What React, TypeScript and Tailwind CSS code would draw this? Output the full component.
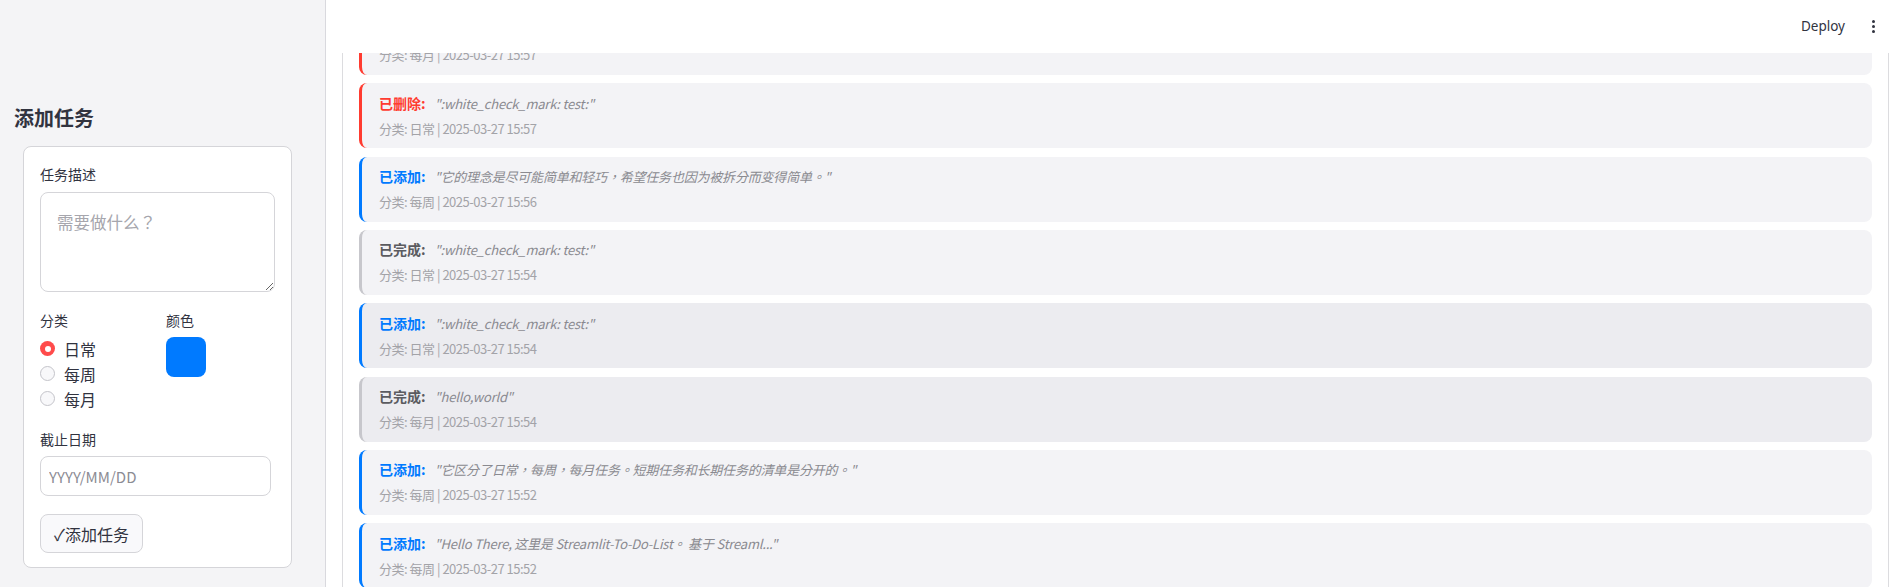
import { useState } from 'react';

type Entry = {
  kind: 'deleted' | 'added' | 'done';
  text: string;
  cat: string;
  time: string;
  dim?: boolean;
};

const entries: Entry[] = [
  { kind: 'deleted', text: '":white_check_mark: test:"', cat: '每月', time: '2025-03-27 15:57' },
  { kind: 'deleted', text: '":white_check_mark: test:"', cat: '日常', time: '2025-03-27 15:57' },
  { kind: 'added', text: '"它的理念是尽可能简单和轻巧，希望任务也因为被拆分而变得简单。"', cat: '每周', time: '2025-03-27 15:56' },
  { kind: 'done', text: '":white_check_mark: test:"', cat: '日常', time: '2025-03-27 15:54' },
  { kind: 'added', text: '":white_check_mark: test:"', cat: '日常', time: '2025-03-27 15:54', dim: true },
  { kind: 'done', text: '"hello,world"', cat: '每月', time: '2025-03-27 15:54', dim: true },
  { kind: 'added', text: '"它区分了日常，每周，每月任务。短期任务和长期任务的清单是分开的。"', cat: '每周', time: '2025-03-27 15:52' },
  { kind: 'added', text: '"Hello There, 这里是 Streamlit-To-Do-List。 基于 Streaml..."', cat: '每周', time: '2025-03-27 15:52' },
];

const kindStyle = {
  deleted: { label: '已删除:', border: 'border-[#ff3b30]', color: 'text-[#ff3b30]' },
  added: { label: '已添加:', border: 'border-[#007aff]', color: 'text-[#007aff]' },
  done: { label: '已完成:', border: 'border-[#c7c7cc]', color: 'text-[#5b5b60]' },
};

function LogCard({ e }: { e: Entry }) {
  const s = kindStyle[e.kind];
  return (
    <div
      className={`h-[65px] shrink-0 rounded-lg border-l-[3px] ${s.border} ${
        e.dim ? 'bg-[#ececf0]' : 'bg-[#f3f3f6]'
      } pl-[17px] pt-[10px]`}
    >
      <div className="flex items-center h-5">
        <span className={`text-[14px] font-bold ${s.color}`}>{s.label}</span>
        <span className="ml-[9px] text-[13px] tracking-[-0.2px] italic text-[#8a8a90] font-['Noto_Sans_CJK_TC',sans-serif]">
          {e.text}
        </span>
      </div>
      <div className="mt-[5px] h-5 flex items-center text-[13px] tracking-[-0.5px] text-[#a3a3a8]">
        分类: {e.cat} | {e.time}
      </div>
    </div>
  );
}

function Radio({ label, checked, onClick }: { label: string; checked: boolean; onClick: () => void }) {
  return (
    <button onClick={onClick} className="flex items-center h-[25px] text-left">
      {checked ? (
        <span className="w-[15px] h-[15px] rounded-full bg-[#ff4b4b] flex items-center justify-center">
          <span className="w-[6px] h-[6px] rounded-full bg-white" />
        </span>
      ) : (
        <span className="w-[15px] h-[15px] rounded-full border border-[#c4c4ca] bg-[#f8f8fa]" />
      )}
      <span className="ml-[9px] text-[16px] text-[#31333f]">{label}</span>
    </button>
  );
}

export default function App() {
  const [cat, setCat] = useState('日常');

  return (
    <div className="h-[587px] w-[1891px] flex overflow-hidden bg-white font-['Noto_Sans_CJK_SC',sans-serif] text-[#31333f]">
      {/* Sidebar */}
      <aside className="w-[326px] shrink-0 bg-[#f4f4f6] border-r border-[#d9d9de] pt-[104px]">
        <h2 className="ml-[14px] text-[20px] leading-[28px] font-bold text-[#31333f]">添加任务</h2>
        <div className="mt-[14px] ml-[23px] w-[269px] rounded-lg border border-[#d5d5d9] bg-white pl-[16px] pr-[17px] pt-[17px] pb-[14px]">
          <div className="text-[14px] leading-5">任务描述</div>
          <textarea
            placeholder="需要做什么？"
            className="mt-[8px] block w-[235px] h-[100px] rounded-lg border border-[#d5d5d9] bg-white px-[16px] pt-[17px] text-[16.5px] leading-6 placeholder:text-[#a6a6ad] outline-none font-['Noto_Sans_CJK_TC',sans-serif]"
          />

          <div className="mt-[18px] grid grid-cols-2 gap-4">
            <div>
              <div className="text-[14px] leading-5">分类</div>
              <div className="mt-[6px] flex flex-col">
                {['日常', '每周', '每月'].map((c) => (
                  <Radio key={c} label={c} checked={cat === c} onClick={() => setCat(c)} />
                ))}
              </div>
            </div>
            <div className="pl-[1px]">
              <div className="text-[14px] leading-5">颜色</div>
              <div className="mt-[7px] w-10 h-10 rounded-lg bg-[#007aff]" />
            </div>
          </div>

          <div className="mt-[18px] text-[14px] leading-5">截止日期</div>
          <input
            placeholder="YYYY/MM/DD"
            className="mt-[7px] block w-[231px] h-10 rounded-lg border border-[#d5d5d9] bg-white px-[8px] text-[15px] placeholder:text-[#8c8c94] outline-none"
          />

          <button className="mt-[18px] h-[39px] w-[103px] rounded-lg border border-[#d5d5d9] bg-[#f9f9fb] text-[16px] text-[#31333f]">
            ✓添加任务
          </button>
        </div>
      </aside>

      {/* Main */}
      <div className="flex-1 flex flex-col min-w-0">
        <header className="h-[53px] shrink-0 bg-white flex items-center justify-end pr-[16px] relative z-10">
          <span className="text-[13.5px] text-[#31333f] font-['Noto_Sans',sans-serif]">Deploy</span>
          <span className="ml-[27px] flex flex-col gap-[2px]">
            <span className="w-[3px] h-[3px] rounded-full bg-[#31333f]" />
            <span className="w-[3px] h-[3px] rounded-full bg-[#31333f]" />
            <span className="w-[3px] h-[3px] rounded-full bg-[#31333f]" />
          </span>
        </header>
        <main className="flex-1 min-h-0 pl-4 pr-[2px]">
          <div className="h-full border-x border-[#dcdcdf] px-[16px] overflow-hidden">
            <div className="-mt-[43px] flex flex-col gap-[8.33px]">
              {entries.map((e, i) => (
                <LogCard key={i} e={e} />
              ))}
            </div>
          </div>
        </main>
      </div>
    </div>
  );
}
